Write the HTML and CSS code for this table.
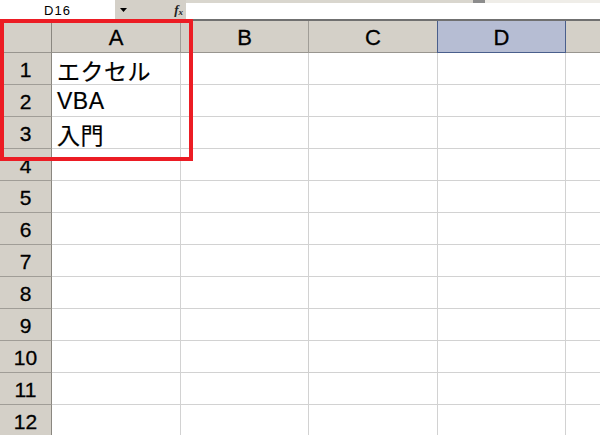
FILE: index.html
```html
<!DOCTYPE html>
<html lang="ja">
<head>
<meta charset="utf-8">
<link rel="stylesheet" href="styles.css">
</head>
<body>
<div class="app">
  <div class="formula-bar">
    <div class="namebox">D16</div>
    <div class="nb-tools">
      <svg class="drop" width="7" height="4" viewBox="0 0 7 4"><path d="M0 0H7L3.5 4Z" fill="#000"/></svg>
      <span class="fx">f<sub>x</sub></span>
    </div>
    <div class="formula">
      <div class="strip"><span class="s1"></span><span class="s2"></span><span class="s3"></span></div>
      <div class="input"></div>
    </div>
  </div>
  <div class="sheet">
    <div class="hd corner"></div>
    <div class="hd col">A</div>
    <div class="hd col">B</div>
    <div class="hd col">C</div>
    <div class="hd col sel">D</div>
    <div class="hd col last"></div>

    <div class="rh">1</div><div class="c">エクセル</div><div class="c"></div><div class="c"></div><div class="c"></div><div class="c last"></div>
    <div class="rh">2</div><div class="c">VBA</div><div class="c"></div><div class="c"></div><div class="c"></div><div class="c last"></div>
    <div class="rh">3</div><div class="c">入門</div><div class="c"></div><div class="c"></div><div class="c"></div><div class="c last"></div>
    <div class="rh">4</div><div class="c"></div><div class="c"></div><div class="c"></div><div class="c"></div><div class="c last"></div>
    <div class="rh">5</div><div class="c"></div><div class="c"></div><div class="c"></div><div class="c"></div><div class="c last"></div>
    <div class="rh">6</div><div class="c"></div><div class="c"></div><div class="c"></div><div class="c"></div><div class="c last"></div>
    <div class="rh">7</div><div class="c"></div><div class="c"></div><div class="c"></div><div class="c"></div><div class="c last"></div>
    <div class="rh">8</div><div class="c"></div><div class="c"></div><div class="c"></div><div class="c"></div><div class="c last"></div>
    <div class="rh">9</div><div class="c"></div><div class="c"></div><div class="c"></div><div class="c"></div><div class="c last"></div>
    <div class="rh">10</div><div class="c"></div><div class="c"></div><div class="c"></div><div class="c"></div><div class="c last"></div>
    <div class="rh">11</div><div class="c"></div><div class="c"></div><div class="c"></div><div class="c"></div><div class="c last"></div>
    <div class="rh">12</div><div class="c"></div><div class="c"></div><div class="c"></div><div class="c"></div><div class="c last"></div>
  </div>
  <div class="highlight"></div>
</div>
</body>
</html>
```

FILE: styles.css
```css
* { box-sizing: border-box; }
html, body { margin: 0; padding: 0; background: #fff; }
body { width: 600px; height: 435px; overflow: hidden; font-family: "Liberation Sans", "Noto Sans CJK JP", sans-serif; }

.app { position: relative; width: 600px; height: 435px; overflow: hidden; }

.formula-bar { display: flex; height: 19px; }
.namebox {
  width: 115px; background: #fff; font-size: 13px; letter-spacing: 1px;
  display: flex; align-items: center; justify-content: center; padding-top: 1px; color: #000;
}
.nb-tools {
  width: 71px; background: #d4d0c8; display: flex; align-items: center;
  justify-content: space-between; padding: 0 3px 0 5px;
}
.drop { margin-top: 1px; }
.fx { font-family: "Liberation Serif", serif; font-style: italic; font-weight: bold; font-size: 13px; color: #222; }
.fx sub { font-size: 9px; vertical-align: -1px; }
.formula { flex: 1; display: flex; flex-direction: column; }
.strip { display: flex; height: 3px; }
.strip .s1 { width: 287px; background: #d9d6ce; }
.strip .s2 { width: 12px; background: #8c8c8c; }
.strip .s3 { flex: 1; background: #efede8; }
.input { flex: 1; background: #fff; }

.sheet {
  display: grid;
  grid-template-columns: 52px 129px 128px 129px 128px 1fr;
  grid-template-rows: 32px repeat(12, 32px);
  border-top: 2px solid #707070;
}
.hd {
  background: #d4d0c8; border-right: 1px solid #a09d97; border-bottom: 1px solid #98958f;
  display: flex; align-items: center; justify-content: center;
  font-size: 22px; color: #000; padding-top: 2px; -webkit-text-stroke: 0.3px #000;
}
.hd.corner { border-right: 1px solid #8a8780; }
.hd.sel { background: #b6bdd3; border-right: 1px solid #4a5f8c; border-bottom: 1px solid #4a5f8c; border-left: 1px solid #4a5f8c; margin-left: -1px; }
.hd.last { border-right: none; }

.rh {
  background: #d4d0c8; border-right: 1px solid #8a8780; border-bottom: 1px solid #a09d97;
  display: flex; align-items: center; justify-content: center;
  font-size: 21px; color: #000; padding-top: 2px; -webkit-text-stroke: 0.3px #000;
}
.c {
  background: #fff; border-right: 1px solid #d2d2d2; border-bottom: 1px solid #d2d2d2;
  display: flex; align-items: center; padding: 2px 0 0 5px;
  font-size: 23px; letter-spacing: 0.5px; color: #000; white-space: nowrap; -webkit-text-stroke: 0.2px #000;
}
.c.last { border-right: none; }

.highlight {
  position: absolute; left: 0; top: 19px; width: 193px; height: 142px;
  border: 4px solid #ec1c24;
}
```
